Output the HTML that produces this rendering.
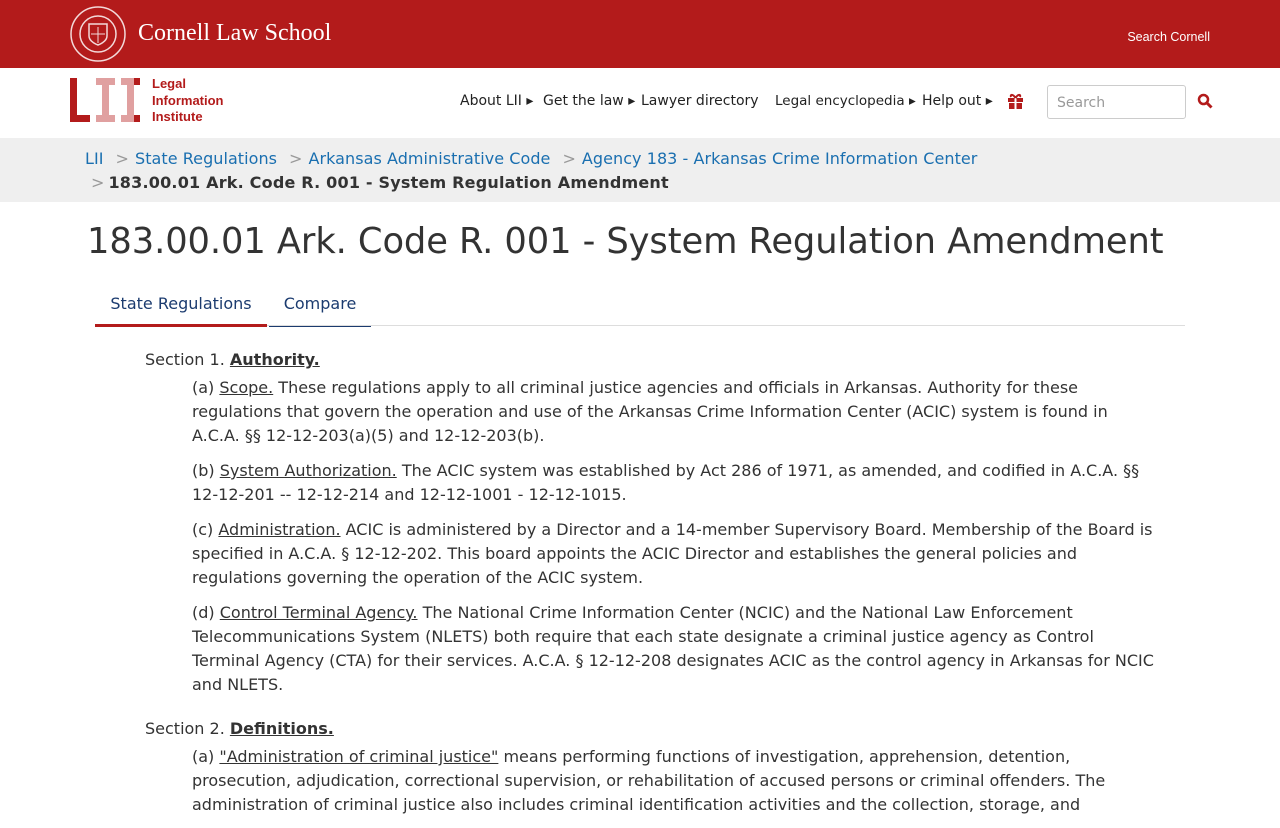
<!DOCTYPE html>
<html><head><meta charset="utf-8"><style>
*{margin:0;padding:0;box-sizing:border-box}
body{width:1280px;height:800px;overflow:hidden;font-family:"DejaVu Sans","Liberation Sans",sans-serif;color:#333;background:#fff}
.top{height:68px;background:#b31b1b;position:relative}
.top .cls{position:absolute;left:138px;top:20px;font-family:"Liberation Serif",serif;font-size:24px;color:#fff}
.top .sc{position:absolute;right:70px;top:30px;font-size:12.5px;color:#fff;font-family:"Liberation Sans",sans-serif}
.nav{height:70px;position:relative}
.m{position:absolute;top:93px;font-size:14px;color:#222}
.bc{background:#efefef;height:64px;padding:9px 0 0 85px;font-size:16px;line-height:24px;letter-spacing:0.05px}
.bc a{color:#1a6fb0;text-decoration:none}
.bc .s{color:#999;margin:0 6px 0 12px}
h1{font-weight:normal;font-size:35.3px;color:#333;position:absolute;left:87px;top:221px;white-space:nowrap;letter-spacing:-0.1px}
.tabs{position:absolute;left:95px;top:290px;width:1090px;height:36px;border-bottom:1px solid #ddd;font-size:16px}
.tab{position:absolute;top:0;height:37px;padding-top:4px;text-align:center;color:#1b3b6f}
.content{position:absolute;left:145px;top:348px;width:1012px;font-size:16px;line-height:24px;color:#333}
.content p{margin-left:47px;margin-bottom:11px}
.content .h{margin:0 0 4px 0}
</style></head><body>
<div class="top">
<svg style="position:absolute;left:70px;top:6px" width="56" height="56" viewBox="0 0 56 56"><circle cx="28" cy="28" r="27" fill="none" stroke="#f3d9d9" stroke-width="1.5"/><circle cx="28" cy="28" r="18" fill="none" stroke="#f3d9d9" stroke-width="1.5"/><path d="M19 18h18v12c0 6-9 9-9 9s-9-3-9-9z" fill="none" stroke="#f3d9d9" stroke-width="1.5"/><path d="M21 28h14M28 21v16" stroke="#f3d9d9"/></svg>
<div class="cls">Cornell Law School</div>
<div class="sc">Search Cornell</div>
</div>
<div class="nav">
<svg style="position:absolute;left:70px;top:10px" width="72" height="44"><rect x="0" y="0" width="7" height="44" fill="#b31b1b"/><rect x="0" y="37" width="20" height="7" fill="#b31b1b"/><rect x="26" y="0" width="19" height="7" fill="#e0a0a0"/><rect x="32" y="0" width="7" height="44" fill="#e0a0a0"/><rect x="26" y="37" width="19" height="7" fill="#e0a0a0"/><rect x="51" y="0" width="19" height="7" fill="#e0a0a0"/><rect x="57" y="0" width="7" height="44" fill="#e0a0a0"/><rect x="51" y="37" width="19" height="7" fill="#e0a0a0"/><rect x="64" y="0" width="6" height="7" fill="#b31b1b"/><rect x="64" y="37" width="6" height="7" fill="#b31b1b"/></svg>
<div style="position:absolute;left:152px;top:8px;font-family:'Liberation Sans',sans-serif;font-weight:bold;font-size:13px;line-height:16.5px;color:#b31b1b">Legal<br>Information<br>Institute</div>
</div>
<div class="m" style="left:460px">About LII ▸</div>
<div class="m" style="left:543px">Get the law ▸</div>
<div class="m" style="left:641px">Lawyer directory</div>
<div class="m" style="left:775px;font-size:13.5px">Legal encyclopedia ▸</div>
<div class="m" style="left:922px">Help out ▸</div>
<svg style="position:absolute;left:1007px;top:93px" width="17" height="16" viewBox="0 0 17 16"><rect x="1" y="5" width="15" height="4" fill="#b31b1b"/><rect x="2" y="10" width="13" height="6" fill="#b31b1b"/><rect x="7.5" y="5" width="2" height="11" fill="#fff"/><path d="M8.5 5C6 1 3 1 4 4M8.5 5C11 1 14 1 13 4" stroke="#b31b1b" stroke-width="2" fill="none"/></svg>
<div style="position:absolute;left:1047px;top:85px;width:139px;height:34px;border:1px solid #ccc;border-radius:3px;padding:9px 9px;font-size:14px;color:#999">Search</div>
<svg style="position:absolute;left:1197px;top:93px" width="16" height="16"><circle cx="6.5" cy="6.5" r="4.5" fill="none" stroke="#b31b1b" stroke-width="2.5"/><path d="M10 10l4.5 4.5" stroke="#b31b1b" stroke-width="3"/></svg>
<div class="bc"><a>LII</a><span class="s">&gt;</span><a>State Regulations</a><span class="s">&gt;</span><a>Arkansas Administrative Code</a><span class="s">&gt;</span><a>Agency 183 - Arkansas Crime Information Center</a><br><span class="s" style="margin-left:6px;margin-right:4px">&gt;</span><b style="letter-spacing:0.2px">183.00.01 Ark. Code R. 001 - System Regulation Amendment</b></div>
<h1>183.00.01 Ark. Code R. 001 - System Regulation Amendment</h1>
<div class="tabs">
<div class="tab" style="left:0;width:172px;border-bottom:3px solid #b31b1b">State Regulations</div>
<div class="tab" style="left:174px;width:102px;border-bottom:1px solid #1b3b6f">Compare</div>
</div>
<div class="content">
<div class="h">Section 1. <b><u>Authority.</u></b></div>
<p>(a) <u>Scope.</u> These regulations apply to all criminal justice agencies and officials in Arkansas. Authority for these regulations that govern the operation and use of the Arkansas Crime Information Center (ACIC) system is found in A.C.A. §§ 12-12-203(a)(5) and 12-12-203(b).</p>
<p>(b) <u>System Authorization.</u> The ACIC system was established by Act 286 of 1971, as amended, and codified in A.C.A. §§ 12-12-201 -- 12-12-214 and 12-12-1001 - 12-12-1015.</p>
<p>(c) <u>Administration.</u> ACIC is administered by a Director and a 14-member Supervisory Board. Membership of the Board is specified in A.C.A. § 12-12-202. This board appoints the ACIC Director and establishes the general policies and regulations governing the operation of the ACIC system.</p>
<p>(d) <u>Control Terminal Agency.</u> The National Crime Information Center (NCIC) and the National Law Enforcement Telecommunications System (NLETS) both require that each state designate a criminal justice agency as Control Terminal Agency (CTA) for their services. A.C.A. § 12-12-208 designates ACIC as the control agency in Arkansas for NCIC and NLETS.</p>
<div class="h" style="margin-top:20px">Section 2. <b><u>Definitions.</u></b></div>
<p>(a) <u>"Administration of criminal justice"</u> means performing functions of investigation, apprehension, detention, prosecution, adjudication, correctional supervision, or rehabilitation of accused persons or criminal offenders. The administration of criminal justice also includes criminal identification activities and the collection, storage, and</p>
</div>
</body></html>
